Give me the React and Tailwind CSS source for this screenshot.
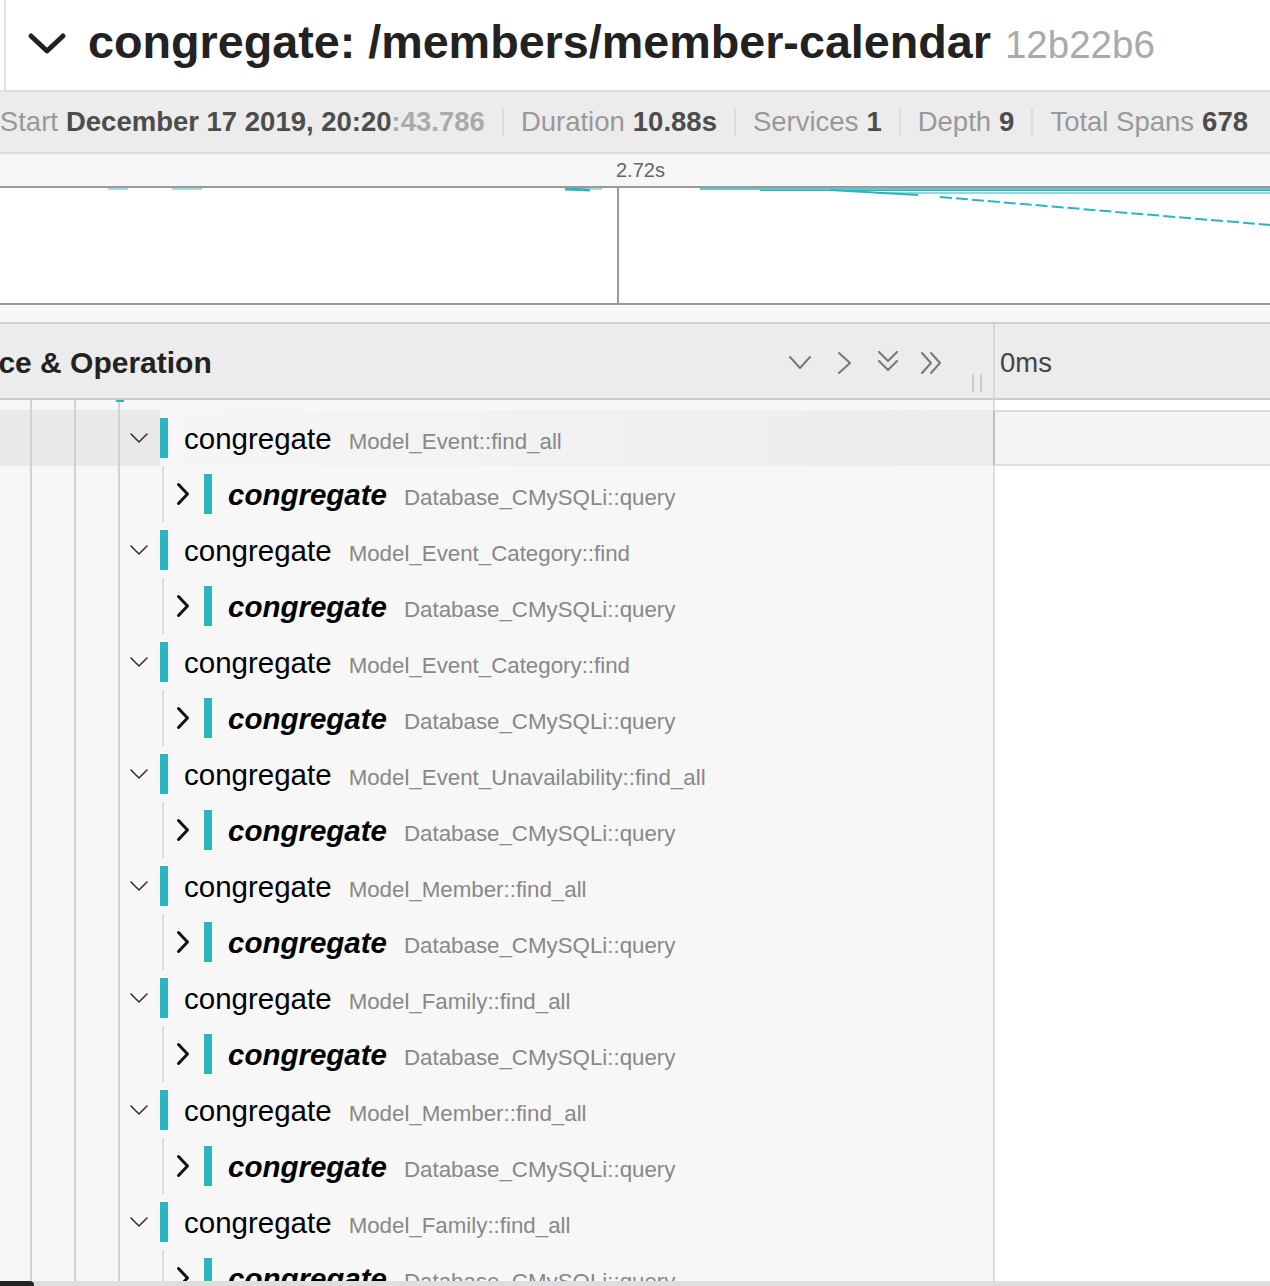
import React from 'react';

const parentOps = [
  'Model_Event::find_all',
  'Model_Event_Category::find',
  'Model_Event_Category::find',
  'Model_Event_Unavailability::find_all',
  'Model_Member::find_all',
  'Model_Family::find_all',
  'Model_Member::find_all',
  'Model_Family::find_all',
];

const rows = parentOps.flatMap(op => [
  { kind: 'parent', op },
  { kind: 'child', op: 'Database_CMySQLi::query' },
]);

function Stat({ label, children, first }) {
  return (
    <div className={`h-[28px] flex items-center px-[17px] ${first ? '' : 'border-l-2 border-[#dcdcdc]'}`}>
      <span className="text-[#999]">{label}</span>
      <span className="ml-[8px] font-bold text-[#4d4d4d]">{children}</span>
    </div>
  );
}

function HeaderIcon({ d }) {
  return (
    <svg width="24" height="24" viewBox="0 0 24 24" fill="none" stroke="#777" strokeWidth="2" strokeLinecap="round" strokeLinejoin="round">
      <path d={d} />
    </svg>
  );
}

function Guides({ child }) {
  return (
    <>
      <div className="w-[32px] border-r-2 border-[#d2d2d2]" />
      <div className="w-[44px] border-r-2 border-[#d2d2d2]" />
      <div className="w-[44px] border-r-2 border-[#d2d2d2]" />
      {child && <div className="w-[44px] border-r-2 border-[#dedede]" />}
    </>
  );
}

function TreeRow({ kind, op, selected }) {
  const isChild = kind === 'child';
  return (
    <div className="flex h-[56px] shrink-0">
      <div className={`w-[993px] flex items-stretch ${selected ? 'bg-linear-to-r from-[#f8f8f8] to-[#ececec]' : 'bg-[#f7f7f7]'}`}>
        <div className={`flex items-stretch ${selected ? 'bg-[#e9e9e9]' : ''}`}>
          <Guides child={isChild} />
          <div className="w-[40px] flex items-center justify-center pr-[3px]">
            {isChild ? (
              <svg width="20" height="24" viewBox="0 0 20 24" fill="none" stroke="#111" strokeWidth="3" strokeLinecap="round" strokeLinejoin="round">
                <path d="M5.5 2.5 L14.5 12 L5.5 21.5" />
              </svg>
            ) : (
              <svg width="20" height="20" viewBox="0 0 20 20" fill="none" stroke="#333" strokeWidth="1.6" strokeLinecap="round" strokeLinejoin="round">
                <path d="M2 6 L10 14 L18 6" />
              </svg>
            )}
          </div>
        </div>
        <div className="flex items-center">
          <div className="w-[8px] h-[40px] bg-[#2bb5be]" />
          <div className="ml-[16px] pt-[1px] flex items-baseline leading-none whitespace-nowrap">
            <span className={`text-[29.5px] text-black ${isChild ? 'font-bold italic' : ''}`}>congregate</span>
            <span className="ml-[17px] text-[22.3px] text-[#888]">{op}</span>
          </div>
        </div>
      </div>
      <div
        className={`flex-1 border-l-2 ${
          selected ? 'border-l-[#bdbdbd] bg-[#f4f4f4] border-y-2 border-y-[#dddddd]' : 'border-l-[#dddddd] bg-white'
        }`}
      />
    </div>
  );
}

export default function App() {
  return (
    <div
      className="w-[1270px] h-[1286px] overflow-hidden flex flex-col bg-white"
      style={{ fontFamily: '"Liberation Sans", Arial, sans-serif' }}
    >
      {/* trace title */}
      <div className="h-[92px] shrink-0 flex border-b-2 border-[#e0e0e0]">
        <div className="ml-[4px] w-[2px] bg-[#e2e2e2]" />
        <div className="flex items-center pb-[5px]">
          <svg className="ml-[21px] mt-[2px]" width="40" height="24" viewBox="0 0 40 24" fill="none" stroke="#222" strokeWidth="5" strokeLinecap="round" strokeLinejoin="round">
            <path d="M4 4 L20 19 L36 4" />
          </svg>
          <div className="ml-[21px] flex items-baseline leading-none whitespace-nowrap">
            <span className="text-[46.7px] font-bold text-[#222]">congregate: /members/member-calendar</span>
            <span className="ml-[14px] text-[38.5px] text-[#aaa]">12b22b6</span>
          </div>
        </div>
      </div>

      {/* trace stats */}
      <div className="h-[62px] shrink-0 bg-[#ececec] border-b-2 border-[#dcdcdc] flex items-center justify-end pr-[5px] overflow-hidden text-[27.5px] leading-none whitespace-nowrap">
        <div className="h-[28px] flex items-center px-[17px]">
          <span className="text-[#999]">Start</span>
          <span className="ml-[8px] font-bold text-[#4d4d4d]">December 17 2019, 20:20</span>
          <span className="font-bold text-[#aaa]">:43.786</span>
        </div>
        <Stat label="Duration">10.88s</Stat>
        <Stat label="Services">1</Stat>
        <Stat label="Depth">9</Stat>
        <Stat label="Total Spans">678</Stat>
      </div>

      {/* ruler */}
      <div className="h-[32px] shrink-0 bg-[#f7f7f7] flex items-center pl-[616px] text-[20px] text-[#666] leading-none">
        2.72s
      </div>

      {/* minimap */}
      <div className="h-[119px] shrink-0 border-y-2 border-[#9a9a9a] bg-white">
        <svg width="1270" height="115" viewBox="0 0 1270 115">
          <line x1="618" y1="0" x2="618" y2="115" stroke="#9a9a9a" strokeWidth="2" />
          <line x1="108" y1="1" x2="128" y2="1" stroke="#9fdfe2" strokeWidth="2" />
          <line x1="172" y1="1" x2="202" y2="1" stroke="#9fdfe2" strokeWidth="2" />
          <line x1="565" y1="1" x2="590" y2="2" stroke="#2bb5be" strokeWidth="3" />
          <line x1="590" y1="1" x2="602" y2="1" stroke="#9fdfe2" strokeWidth="2" />
          <line x1="700" y1="1" x2="1270" y2="1" stroke="#2bb5be" strokeWidth="1.5" />
          <line x1="760" y1="2.5" x2="1270" y2="2.5" stroke="#2bb5be" strokeWidth="1" />
          <line x1="877" y1="5" x2="1270" y2="5" stroke="#8fdbdf" strokeWidth="2" />
          <line x1="830" y1="2" x2="918" y2="7" stroke="#2bb5be" strokeWidth="2" />
          <line x1="940" y1="9" x2="1270" y2="37" stroke="#2bb5be" strokeWidth="2" strokeDasharray="12 4" />
        </svg>
      </div>

      <div className="h-[19px] shrink-0 bg-[#f7f7f7] border-b-2 border-[#cfcfcf]" />

      {/* column header */}
      <div className="h-[76px] shrink-0 flex bg-[#ececec] border-b-2 border-[#cccccc]">
        <div className="w-[993px] flex items-center pt-[3px] overflow-hidden">
          <span className="ml-[-75px] text-[30px] font-bold text-[#222] leading-none whitespace-nowrap">Service &amp; Operation</span>
          <div className="ml-auto flex items-center gap-[20px]">
            <HeaderIcon d="M2 6 L12 17 L22 6" />
            <HeaderIcon d="M7 2 L18 12 L7 22" />
            <HeaderIcon d="M3 1 L12 10 L21 1 M3 10 L12 19 L21 10" />
            <HeaderIcon d="M2 2 L11 12 L2 22 M11 2 L20 12 L11 22" />
          </div>
          <div className="ml-[28px] mr-[11px] self-end mb-[6px] flex gap-[6px] h-[18px]">
            <div className="w-[2px] bg-[#cccccc]" />
            <div className="w-[2px] bg-[#cccccc]" />
          </div>
        </div>
        <div className="flex-1 border-l-2 border-[#d8d8d8] flex items-center pt-[3px] pl-[5px] text-[27.5px] text-[#444] leading-none">
          0ms
        </div>
      </div>

      {/* span tree */}
      <div className="flex-1 overflow-hidden flex flex-col">
        <div className="flex h-[10px] shrink-0">
          <div className="w-[993px] flex items-stretch bg-[#f7f7f7]">
            <Guides />
            <div className="ml-[-4px] w-[8px] h-[2px] bg-[#2bb5be]" />
          </div>
          <div className="flex-1 border-l-2 border-[#dddddd] bg-white" />
        </div>
        {rows.map((r, i) => (
          <TreeRow key={i} kind={r.kind} op={r.op} selected={i === 0} />
        ))}
      </div>

      {/* window edge */}
      <div className="h-[5px] shrink-0 flex">
        <div className="w-[34px] bg-[#222] rounded-tr-[4px]" />
        <div className="flex-1 bg-[#dedede]" />
      </div>
    </div>
  );
}
